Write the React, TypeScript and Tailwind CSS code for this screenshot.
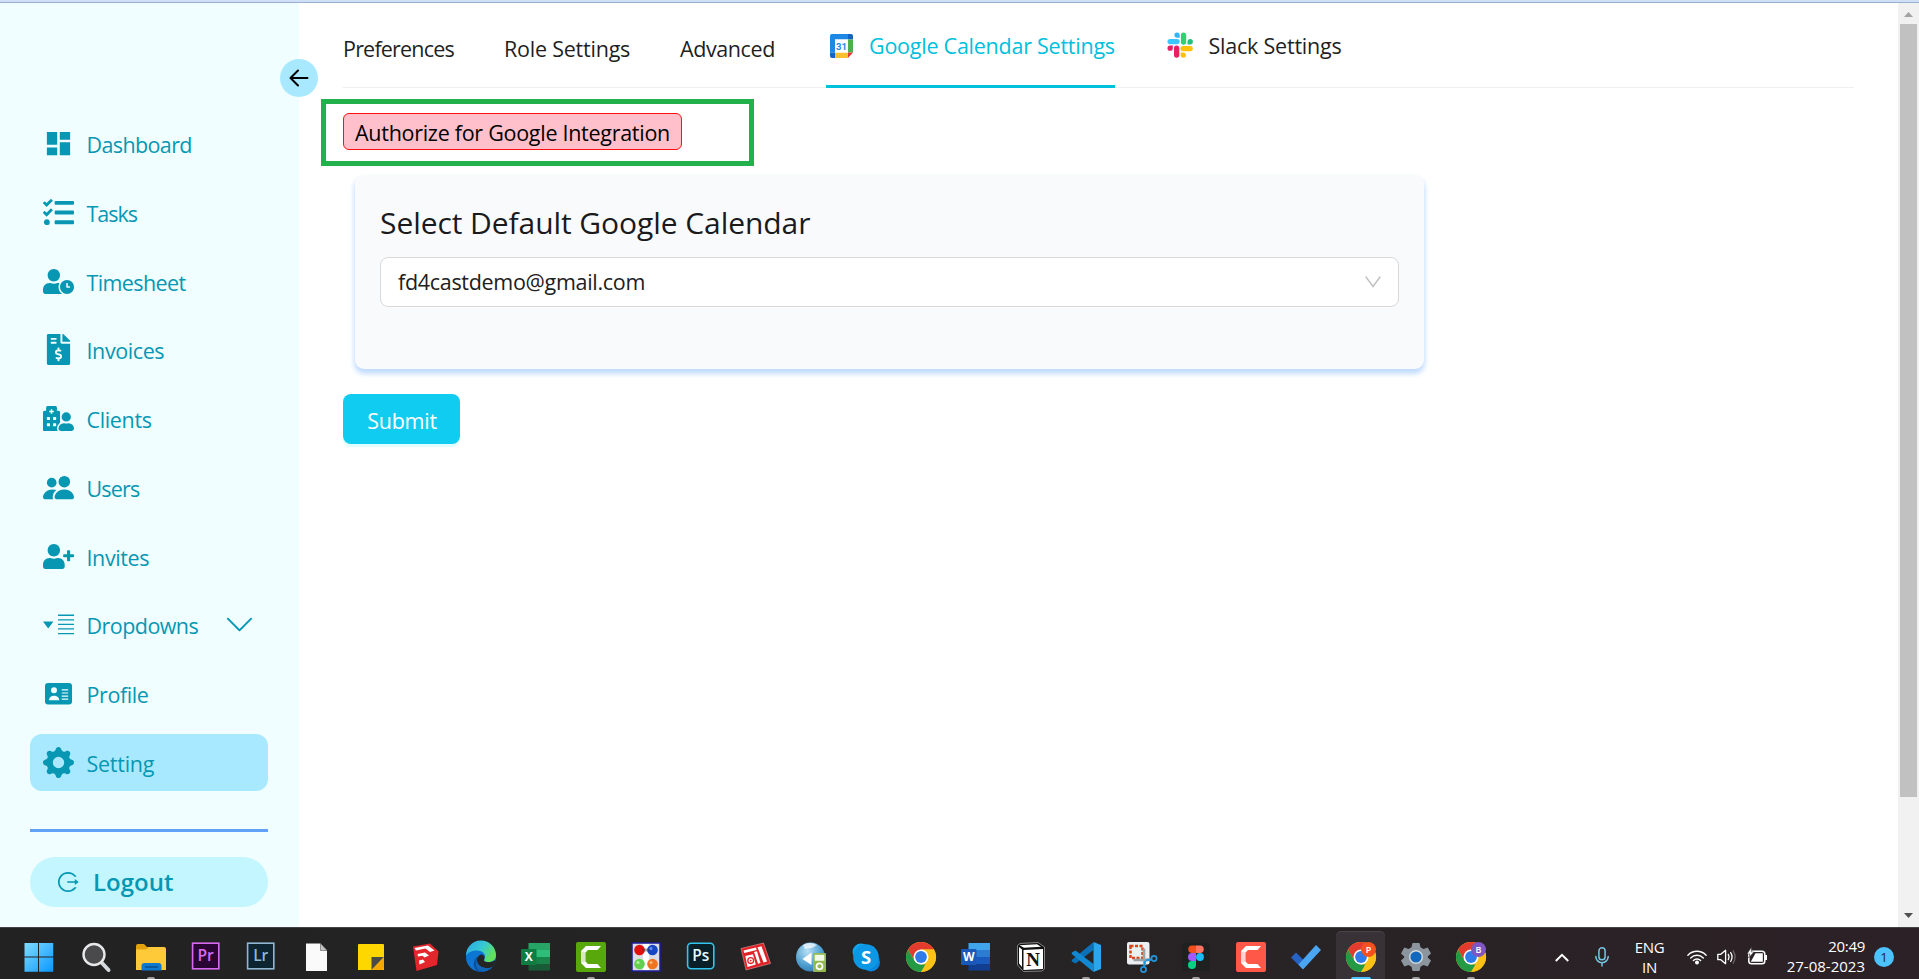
import type { ReactNode } from "react";
import { MdDashboard } from "react-icons/md";
import { FaTasks, FaUserClock, FaFileInvoiceDollar, FaHospitalUser, FaUserPlus } from "react-icons/fa";
import { BsPeopleFill, BsGearFill, BsChevronDown } from "react-icons/bs";
import { AiOutlineLogout } from "react-icons/ai";

const DropdownsIcon = () => (
  <svg width="31" height="21" viewBox="0 0 31 21" fill="currentColor">
    <path d="M0 7.600h10.400L5.200 14.400z" />
    <path d="M15 .6h16v1.300H15zM15 5.200h16v1.300H15zM15 9.800h16v1.300H15zM15 14.300h16v1.300H15zM15 18.900h16v1.300H15z" />
  </svg>
);

const ProfileIcon = () => (
  <svg width="27" height="22" viewBox="0 0 27 22">
    <rect width="27" height="21.500" rx="3" fill="currentColor" />
    <circle cx="9" cy="7.300" r="3" fill="#f0feff" />
    <path d="M4 17.300c0-3 2-4.600 5-4.600s5.200 1.600 5.200 4.600z" fill="#f0feff" />
    <path d="M16.700 6.900h6.500M16.700 10h6.500M16.700 13.100h6.500M16.700 16.200h6.500" stroke="#f0feff" strokeWidth="1.200" />
  </svg>
);

type NavItem = { label: string; tracking: string; icon: ReactNode; active?: boolean; chevron?: boolean };

const navItems: NavItem[] = [
  { label: "Dashboard", tracking: "tracking-[-0.62px]", icon: <MdDashboard size={31} /> },
  { label: "Tasks", tracking: "tracking-[-1px]", icon: <FaTasks size={31} /> },
  { label: "Timesheet", tracking: "tracking-[-0.6px]", icon: <FaUserClock size={31} /> },
  { label: "Invoices", tracking: "tracking-[-0.4px]", icon: <FaFileInvoiceDollar size={31} /> },
  { label: "Clients", tracking: "tracking-[-0.35px]", icon: <FaHospitalUser size={31} /> },
  { label: "Users", tracking: "tracking-[-0.85px]", icon: <BsPeopleFill size={31} /> },
  { label: "Invites", tracking: "tracking-[-0.4px]", icon: <FaUserPlus size={31} /> },
  { label: "Dropdowns", tracking: "tracking-[-0.55px]", icon: <DropdownsIcon />, chevron: true },
  { label: "Profile", tracking: "tracking-[-0.4px]", icon: <ProfileIcon /> },
  { label: "Setting", tracking: "tracking-[-0.25px]", icon: <BsGearFill size={31} />, active: true },
];

function Sidebar() {
  return (
    <aside className="relative flex w-[299px] shrink-0 flex-col bg-[#f0feff] pt-[112px] pr-[31px] pl-[30px] text-[#0797b3]">
      <button className="absolute top-[56px] left-[280px] z-10 flex size-[38px] items-center justify-center rounded-full bg-[#a8e9ff]">
        <svg width="20" height="18" viewBox="0 0 20 18" fill="none" stroke="#000" strokeWidth="2" strokeLinecap="round" strokeLinejoin="round">
          <path d="M18.500 9H1.500M9 1.500L1.500 9L9 16.500" />
        </svg>
      </button>
      <nav className="flex flex-col gap-[11.75px]">
        {navItems.map((item) => (
          <a
            key={item.label}
            className={`flex h-[57px] items-center rounded-[12px] pl-[13px] ${item.active ? "bg-[#a8e9ff]" : ""}`}
          >
            <span className="flex w-[31px] shrink-0 justify-center">{item.icon}</span>
            <span className={`mt-[3px] ml-[12.5px] text-[21.5px] leading-[30px] ${item.tracking}`}>{item.label}</span>
            {item.chevron && <BsChevronDown size={31} className="mr-[13px] ml-auto" />}
          </a>
        ))}
      </nav>
      <hr className="mt-[38px] h-[3px] border-0 bg-[#60a2fa]" />
      <button className="mt-[25px] flex h-[50px] items-center rounded-[25px] bg-[#c3f6ff] pl-[26px]">
        <AiOutlineLogout size={24} />
        <span className="mt-[1px] ml-[13px] text-[24px] leading-[32px] font-semibold">Logout</span>
      </button>
    </aside>
  );
}

const CalendarIcon = () => (
  <svg width="23" height="24" viewBox="0 0 23 24" className="shrink-0">
    <path d="M2 0H18V5.500H5V18.500H0V2Q0 0 2 0Z" fill="#1e88e5" />
    <path d="M18 0h3q2 0 2 2v3.500h-5z" fill="#1565c0" />
    <path d="M18 5.500h5v13h-5z" fill="#4caf50" />
    <path d="M5 18.500h13V24H5z" fill="#fbc02d" />
    <path d="M0 18.500h5V24H2q-2 0-2-2z" fill="#1565c0" />
    <path d="M18 18.500h5L18 24z" fill="#e53935" />
    <path d="M5 5.500h13v13H5z" fill="#fff" />
    <text x="11.500" y="15.500" textAnchor="middle" fontFamily="Roboto" fontSize="9.500" fontWeight="700" fill="#1e88e5">31</text>
  </svg>
);

const SlackIcon = () => (
  <svg width="26" height="26" viewBox="0 0 26 26" className="shrink-0">
    <path d="M10 .5a2.600 2.600 0 0 0 0 5.200h2.700V3.100A2.650 2.650 0 0 0 10 .5z" fill="#33b5f5" />
    <rect x=".5" y="7" width="12.200" height="5.200" rx="2.600" fill="#40c4ff" />
    <rect x="13.900" y=".5" width="5.300" height="12.200" rx="2.650" fill="#2fd173" />
    <path d="M20.500 12.500V9.700a2.700 2.700 0 1 1 2.700 2.800z" fill="#2bbd7e" />
    <rect x="7" y="13.500" width="5.300" height="12.200" rx="2.650" fill="#e91e63" />
    <path d="M5.800 13.500v2.700a2.650 2.650 0 1 1-2.650-2.700z" fill="#e91e63" />
    <rect x="13.500" y="14" width="12.300" height="5.200" rx="2.600" fill="#ffc107" />
    <path d="M13.700 20.500h2.700a2.600 2.600 0 1 1-2.700 2.600z" fill="#ffc107" />
  </svg>
);

function Tabs() {
  return (
    <div className="mx-[44px] flex h-[85px] items-stretch border-b border-[#f0f0f0] text-[21.5px] leading-[30px] text-[#1f1f1f]">
      <div className="w-[161px] pt-[31px] tracking-[-0.8px]">Preferences</div>
      <div className="w-[176px] pt-[31px] tracking-[-0.22px]">Role Settings</div>
      <div className="w-[146px] pt-[31px] tracking-[-0.4px]">Advanced</div>
      <div className="-mb-px flex h-[85px] w-[289px] items-start border-b-[3px] border-[#00c0de] pt-[28px] pl-[4px] text-[#00bfdc]">
        <div className="mt-[3px]">
          <CalendarIcon />
        </div>
        <span className="ml-[16px] tracking-[-0.24px] whitespace-nowrap">Google Calendar Settings</span>
      </div>
      <div className="ml-[52px] flex items-start pt-[28px]">
        <div className="mt-[1px]">
          <SlackIcon />
        </div>
        <span className="ml-[15.5px] tracking-[-0.22px] whitespace-nowrap">Slack Settings</span>
      </div>
    </div>
  );
}

function Main() {
  return (
    <main className="flex min-w-0 flex-1 flex-col items-start bg-white">
      <div className="w-full">
        <Tabs />
      </div>
      <div className="mt-[11px] ml-[22px] h-[67px] w-[433px] border-[5px] border-[#22b14c] pt-[9px] pl-[17px]">
        <button className="flex h-[37px] w-[339px] items-center justify-center rounded-[6px] border border-[#ff1010] bg-[#ffc0cb] text-[21.5px] leading-[30px] tracking-[-0.28px] text-black">
          <span className="mt-[3px] whitespace-nowrap">Authorize for Google Integration</span>
        </button>
      </div>
      <section className="mt-[9px] ml-[56px] h-[194px] w-[1069px] rounded-[9px] bg-[#f9fafc] px-[25px] pt-[27px] shadow-[0_4px_6px_-1px_#bfdbfe,0_4px_6px_-1px_#bfdbfe]">
        <h2 className="h-[55px] text-[30px] leading-[42px] tracking-[-0.07px] text-[#1a1a1c]">Select Default Google Calendar</h2>
        <div className="flex h-[50px] items-center justify-between rounded-[8px] border border-[#d9d9d9] bg-white px-[17px]">
          <span className="text-[21.5px] leading-[30px] tracking-[-0.3px] text-[#202020]">fd4castdemo@gmail.com</span>
          <svg width="16" height="12" viewBox="0 0 16 12" fill="none" stroke="#bfbfbf" strokeWidth="1.500" className="mb-[1px]">
            <path d="M.7.600L8 10.500L15.300.600" />
          </svg>
        </div>
      </section>
      <button className="mt-[25px] ml-[44px] flex h-[50px] w-[117px] items-center justify-center rounded-[8px] bg-[#10ccf0] text-[21.5px] leading-[30px] tracking-[-0.25px] text-white shadow-[0_3px_0_#e0feff]">
        <span className="mt-[3px] ml-[1px]">Submit</span>
      </button>
    </main>
  );
}

function Scrollbar() {
  return (
    <div className="flex w-[21px] shrink-0 flex-col items-center bg-[#f1f1f1] py-[9px]">
      <svg width="9" height="5" viewBox="0 0 9 5" fill="#a3a3a3">
        <path d="M4.500 0L9 5H0z" />
      </svg>
      <div className="mt-[7px] h-[773px] w-[17px] bg-[#c1c1c1]" />
      <svg width="9" height="5" viewBox="0 0 9 5" fill="#505050" className="mt-auto">
        <path d="M0 0h9L4.500 5z" />
      </svg>
    </div>
  );
}

function Icon({ children }: { children: ReactNode }) {
  return (
    <svg width="32" height="32" viewBox="0 0 32 32" className="overflow-visible">
      {children}
    </svg>
  );
}

const Windows = () => (
  <Icon>
    <defs>
      <linearGradient id="win" x1="0" y1="0" x2="1" y2="1">
        <stop offset="0" stopColor="#7fdcff" />
        <stop offset="1" stopColor="#0a97ff" />
      </linearGradient>
    </defs>
    <path d="M1.500 2H15v13.500H1.500zM16 2h14.200v13.500H16zM1.500 16.500H15V30.700H1.500zM16 16.500h14.200v14.200H16z" fill="url(#win)" />
  </Icon>
);

const SearchIcon = () => (
  <Icon>
    <path d="M22 22l6.500 7" stroke="#d5d8dd" strokeWidth="4" strokeLinecap="round" />
    <circle cx="14" cy="13.500" r="10.500" fill="#4a4a4c" stroke="#e6e8ea" strokeWidth="2.400" />
  </Icon>
);

const Folder = () => (
  <Icon>
    <path d="M1 5q0-2 2-2h6l3 3h8v8H1z" fill="#e2a20c" />
    <path d="M1 8.500h10l3-2.500h15q2 0 2 2v21H1z" fill="#ffca3a" />
    <path d="M6.500 29.500V25q0-3 3-3h14q3 0 3 3v4.500z" fill="#0f78cf" />
    <path d="M10 26h13" stroke="#084a86" strokeWidth="1.300" />
  </Icon>
);

function AdobeTile({ label, fg, bg, rx }: { label: string; fg: string; bg: string; rx: number }) {
  return (
    <Icon>
      <rect x="2.600" y="2.200" width="26.200" height="25.600" rx={rx} fill={bg} stroke={fg} strokeWidth="1.600" />
      <text x="15.700" y="20.300" textAnchor="middle" fontFamily="Open Sans" fontSize="15.500" fontWeight="600" fill={fg === "#31c5f0" ? "#e8fbff" : fg}>
        {label}
      </text>
    </Icon>
  );
}

const FileDoc = () => (
  <Icon>
    <path d="M6 2.500h14.500l6.500 7V30H6z" fill="#fafafa" />
    <path d="M20.500 2.500v7H27z" fill="#c5c5c5" stroke="#555" strokeWidth=".6" />
  </Icon>
);

const StickyNote = () => (
  <Icon>
    <path d="M3 4q0-1 1-1h24q1 0 1 1v25H3z" fill="#fed700" />
    <path d="M16.500 29V16H29z" fill="#4a4a46" />
    <path d="M16.500 29L29 16v11q0 2-2 2z" fill="#f5a800" />
  </Icon>
);

const SketchUp = () => (
  <Icon>
    <path d="M3 5.500L20 2.500L28.500 10.500L27 24L6.500 30z" fill="#e3262b" />
    <path d="M4.500 7L18 4.500L24.500 9.500L20 11L15.500 7.500L6 9.500zM7.500 13L15 11.500L19 14.500L14.500 16.500L12.500 14.800L8 15.500zM9 19.500L13 18.500L15 21L9.500 23.500z" fill="#fff" />
  </Icon>
);

const Edge = () => (
  <Icon>
    <defs>
      <linearGradient id="edgeTop" x1="0" y1="0" x2="1" y2=".5">
        <stop offset="0" stopColor="#2aa5e8" />
        <stop offset=".55" stopColor="#36c9d4" />
        <stop offset="1" stopColor="#62e05a" />
      </linearGradient>
    </defs>
    <circle cx="16" cy="16" r="15" fill="#0c76d0" />
    <path d="M1 15A15 15 0 0 1 31 14c0 5-3.500 7-7.500 7c-3.500 0-5-1.200-4.200-2.500C22 14 18 9.500 12 9.500C6 9.500 2 12 1 15z" fill="url(#edgeTop)" />
    <path d="M11.500 20c0 4 4 7.500 9 7.500c3 0 5.500-1 7-2.200A15 15 0 0 1 16 31c-6 0-8-6-7-10c.7-3 2.500-5.200 5-6c-1.500 1.500-2.500 3-2.500 5z" fill="#0b4f9e" />
    <path d="M12 20c-.3-3 1.200-5.500 4-6.500c2.800 0 4.200 2.300 3.200 4.800c-1 1.800 1 3 4.300 3c3 0 6-1 7.300-3c-.3 3-1.600 5.700-3.500 7.500c-5 3-14.800.500-15.300-5.800z" fill="#242425" />
    <path d="M12 20c.500 5.500 8 9 15.500 6.200C24 30 18 31.500 14 29.500C11 27 10 23 12 20z" fill="#1166b8" />
  </Icon>
);

function OfficeTile({ letter, shades, badge }: { letter: string; shades: string[]; badge: string }) {
  return (
    <Icon>
      <rect x="8.500" y="2" width="21.500" height="7" fill={shades[0]} />
      <rect x="8.500" y="9" width="21.500" height="7" fill={shades[1]} />
      <rect x="8.500" y="16" width="21.500" height="7" fill={shades[2]} />
      <rect x="8.500" y="23" width="21.500" height="6.500" fill={shades[3]} />
      <rect x="1" y="8" width="15.500" height="16" rx="1" fill={badge} />
      <text x="8.700" y="20.400" textAnchor="middle" fontFamily="Open Sans" fontSize="12" fontWeight="700" fill="#fff">
        {letter}
      </text>
    </Icon>
  );
}

function Camtasia({ bg }: { bg: string }) {
  return (
    <Icon>
      <rect x="1" y="1" width="30" height="30" rx="2" fill={bg} />
      <path d="M26 5H11l-5 5v12l5 5h15l-3.500-4H13l-2.500-2.500v-9L13 9h9.500z" fill="#fff" />
      <path d="M6 10l4.500 1.500v9L6 22z" fill={bg} fillOpacity=".25" />
    </Icon>
  );
}

const Balls = () => (
  <Icon>
    <rect x="2" y="2" width="28" height="28" fill="#dcdce6" stroke="#1c1c9c" strokeWidth="1.500" />
    <path d="M13 3h6v26h-6z" fill="#fff" />
    <circle cx="9.500" cy="9" r="5.300" fill="#e01010" />
    <circle cx="22.500" cy="9" r="5.300" fill="#1746c4" />
    <circle cx="9.500" cy="23" r="5.300" fill="#62cf50" />
    <circle cx="22.500" cy="23" r="5.300" fill="#ee7420" />
    <path d="M12.500 7.500h7v3h-7z" fill="#333" fillOpacity=".45" />
    <circle cx="21" cy="7.500" r="1.500" fill="#6a90f5" />
    <circle cx="8" cy="21.500" r="1.500" fill="#b3f5a5" />
    <circle cx="21" cy="21.500" r="1.500" fill="#ffb980" />
  </Icon>
);

const Layout = () => (
  <Icon>
    <path d="M1 7.500L23.500 2L30.500 22.500L6 29z" fill="#e02227" stroke="#f4b5b5" strokeWidth=".5" />
    <path d="M3.500 9.500L16 6.600L16.700 9L4.300 12zM17.500 6.200L21.500 5.200L27 20.500L23.500 21.500zM14 11L17 10.300L20.500 22L18 22.800zM5.300 15L13 13.200L15.800 23.500L7.500 26z" fill="#fff" />
    <circle cx="10.700" cy="19.600" r="2.900" fill="none" stroke="#e02227" strokeWidth="1.300" />
    <circle cx="10.700" cy="19.600" r=".9" fill="#e02227" />
  </Icon>
);

const Globe = () => (
  <Icon>
    <defs>
      <radialGradient id="globe" cx=".4" cy=".3" r=".8">
        <stop offset="0" stopColor="#b8e0f5" />
        <stop offset=".6" stopColor="#4f9fd0" />
        <stop offset="1" stopColor="#2f76ac" />
      </radialGradient>
    </defs>
    <circle cx="15.500" cy="16" r="14.500" fill="url(#globe)" />
    <path d="M8 4q7-4 14 0l-5 3l-7 1z" fill="#fff" fillOpacity=".7" />
    <path d="M7.500 18l9-6.500V24z" fill="#fff" />
    <rect x="18" y="12" width="13" height="19" rx="1" fill="#93b950" />
    <rect x="19.700" y="13.800" width="9.600" height="6" fill="#f3f8e8" />
    <circle cx="24.500" cy="25.300" r="3" fill="none" stroke="#fff" strokeWidth="1.700" />
  </Icon>
);

const Skype = () => (
  <Icon>
    <circle cx="11" cy="11" r="8.500" fill="#0fa8ec" />
    <circle cx="21" cy="21.500" r="9" fill="#0a86dc" />
    <circle cx="16" cy="16" r="12.800" fill="#0d98e6" />
    <text x="16" y="22.500" textAnchor="middle" fontFamily="Open Sans" fontSize="18.500" fontWeight="700" fill="#fff">S</text>
  </Icon>
);

function Chrome({ badge, badgeFill }: { badge?: string; badgeFill?: string }) {
  return (
    <Icon>
      <circle cx="16" cy="16" r="15" fill="#fbc116" />
      <path d="M16 8.500h13A15 15 0 0 0 3 8.500l6.500 11.200z" fill="#e33b2e" />
      <path d="M3 8.500l6.500 11.250L16 23.500h6.500L16 31A15 15 0 0 1 3 8.500z" fill="#259a45" />
      <path d="M22.500 19.750L16 31A15 15 0 0 0 29 8.500H16z" fill="#fbc116" />
      <circle cx="16" cy="16" r="7.500" fill="#fff" />
      <circle cx="16" cy="16" r="5.900" fill="#2f7bea" />
      {badge && (
        <>
          <circle cx="23.500" cy="8.500" r="7.500" fill={badgeFill} />
          <text x="23.500" y="11.800" textAnchor="middle" fontFamily="Open Sans" fontSize="9" fontWeight="600" fill="#fff">
            {badge}
          </text>
        </>
      )}
    </Icon>
  );
}

const Notion = () => (
  <Icon>
    <path d="M2.500 4.500L5 2.500L23 1.500L29.500 6V28L27 30L8.500 30.500L2.500 24z" fill="#111" stroke="#9f9f9f" strokeWidth=".8" />
    <path d="M4.500 4.200L22 3.200L26 5.800L9 6.800zM4 6L7 8.500V26L4 22.500z" fill="#fff" />
    <path d="M8.500 9L28 8V28L8.500 29z" fill="#fff" />
    <text x="18.200" y="24.800" textAnchor="middle" fontFamily="Liberation Serif" fontSize="19" fontWeight="700" fill="#111">N</text>
  </Icon>
);

const VsCode = () => (
  <Icon>
    <path d="M23.500 1v8L5.500 22.500L1.800 20.500V19z" fill="#0a70b8" />
    <path d="M1.800 11.500L5.500 9.500L23.500 23v8L1.800 13z" fill="#1387cf" />
    <path d="M23.500 1L31 4v24l-7.500 3z" fill="#29a6ee" />
  </Icon>
);

const Snip = () => (
  <Icon>
    <rect x="2" y="1" width="22.500" height="22.500" rx="2" fill="#eceff1" />
    <rect x="5.500" y="5" width="12" height="12" fill="none" stroke="#d8431c" strokeWidth="2.500" strokeDasharray="3 1.500" />
    <path d="M19 7.500v12l1 5M8.500 19h12l5-1" fill="none" stroke="#9aa3a9" strokeWidth="2.600" />
    <circle cx="29" cy="17.500" r="2.600" fill="none" stroke="#2196dd" strokeWidth="1.700" />
    <circle cx="18.500" cy="28.500" r="2.600" fill="none" stroke="#2196dd" strokeWidth="1.700" />
    <path d="M20 20l-1 6M20.500 19.500l6-1" stroke="#2196dd" strokeWidth="1.800" />
  </Icon>
);

const Figma = () => (
  <Icon>
    <rect x="2" y="2" width="28" height="28" rx="3" fill="#1f2121" />
    <path d="M16 4.500v7.500h-4a3.750 3.750 0 0 1 0-7.500z" fill="#f24e1e" />
    <path d="M16 4.500h4a3.750 3.750 0 0 1 0 7.500h-4z" fill="#ff7262" />
    <path d="M16 12v8h-4a4 4 0 0 1 0-8z" fill="#a259ff" />
    <circle cx="20" cy="16" r="3.900" fill="#1abcfe" />
    <path d="M16 20v4a4 4 0 1 1-4-4z" fill="#0acf83" />
  </Icon>
);

const Todo = () => (
  <Icon>
    <path d="M1 16.500l5-5l9.500 9.500l-3 7z" fill="#2763c4" />
    <path d="M8.500 23.500L26 4l5 5L13 28.500z" fill="#4aa6f2" />
  </Icon>
);

const SettingsGear = () => (
  <Icon>
    <path d="M12.500 2h7l1 4.200l3 1.700l4.200-1.300l3.300 6l-3.200 3v.8l3.200 3l-3.300 6l-4.200-1.300l-3 1.700l-1 4.200h-7l-1-4.200l-3-1.700l-4.200 1.300l-3.300-6l3.200-3v-.8l-3.200-3l3.300-6l4.200 1.300l3-1.700z" fill="#8c959d" />
    <circle cx="16" cy="16" r="7" fill="#d5dade" />
    <circle cx="16" cy="16" r="5.600" fill="#1168bd" />
  </Icon>
);

type TaskbarApp = { id: string; icon: ReactNode; running?: boolean; active?: boolean };

const taskbarApps: TaskbarApp[] = [
  { id: "search", icon: <SearchIcon /> },
  { id: "explorer", icon: <Folder />, running: true },
  { id: "premiere", icon: <AdobeTile label="Pr" fg="#d66bf0" bg="#2a0634" rx={0} /> },
  { id: "lightroom", icon: <AdobeTile label="Lr" fg="#8fb8d4" bg="#0c2531" rx={0} /> },
  { id: "file", icon: <FileDoc /> },
  { id: "notes", icon: <StickyNote /> },
  { id: "sketchup", icon: <SketchUp /> },
  { id: "edge", icon: <Edge /> },
  { id: "excel", icon: <OfficeTile letter="X" shades={["#27a567", "#2fbd7a", "#17854a", "#185c37"]} badge="#107c41" /> },
  { id: "camtasia", icon: <Camtasia bg="#58a80c" />, running: true },
  { id: "balls", icon: <Balls /> },
  { id: "photoshop", icon: <AdobeTile label="Ps" fg="#31c5f0" bg="#0a2029" rx={3.5} /> },
  { id: "layout", icon: <Layout /> },
  { id: "globe", icon: <Globe /> },
  { id: "skype", icon: <Skype /> },
  { id: "chrome", icon: <Chrome /> },
  { id: "word", icon: <OfficeTile letter="W" shades={["#41a5ee", "#2b7cd3", "#185abd", "#103f91"]} badge="#1a58b8" /> },
  { id: "notion", icon: <Notion /> },
  { id: "vscode", icon: <VsCode />, running: true },
  { id: "snip", icon: <Snip /> },
  { id: "figma", icon: <Figma />, running: true },
  { id: "recorder", icon: <Camtasia bg="#ff5848" /> },
  { id: "todo", icon: <Todo /> },
  { id: "chrome-p", icon: <Chrome badge="P" badgeFill="#f4511e" />, active: true },
  { id: "settings", icon: <SettingsGear />, running: true },
  { id: "chrome-b", icon: <Chrome badge="B" badgeFill="#7e57c2" />, running: true },
];

function Tray() {
  return (
    <div className="ml-auto flex items-center pt-[7px] text-[15px] leading-[20px] text-white">
      <svg width="14" height="9" viewBox="0 0 14 9" fill="none" stroke="#fff" strokeWidth="2">
        <path d="M.8 8L7 1.800L13.200 8" />
      </svg>
      <svg width="14" height="20" viewBox="0 0 14 20" fill="none" stroke="#74c7e3" strokeWidth="1.500" strokeLinecap="round" className="ml-[26px]">
        <rect x="3.900" y=".8" width="6.200" height="12" rx="3.100" />
        <path d="M.8 9.500a6.200 6.200 0 0 0 12.400 0M7 15.800V19" />
      </svg>
      <div className="ml-[25px] flex w-[31px] flex-col items-center pb-[1px] tracking-[-0.3px]">
        <span>ENG</span>
        <span>IN</span>
      </div>
      <svg width="20" height="16" viewBox="0 0 20 16" fill="none" stroke="#fff" strokeWidth="1.400" strokeLinecap="round" className="ml-[22px]">
        <path d="M.9 6.200a12.600 12.600 0 0 1 18.200 0M3.700 9a8.700 8.700 0 0 1 12.600 0M6.400 11.500a5 5 0 0 1 7.200 0" />
        <circle cx="10" cy="13.600" r="1.300" fill="#fff" />
      </svg>
      <svg width="21" height="16" viewBox="0 0 21 16" fill="none" stroke="#fff" strokeWidth="1.300" strokeLinecap="round" strokeLinejoin="round" className="ml-[10px]">
        <path d="M.8 5.300h3L8.600 1.300v13.400L3.800 10.700h-3zM11.300 5.400q1.500 2.600 0 5.200M13.700 3.600q2.700 4.400 0 8.800" />
        <path d="M16.200 1.800q3.800 6.200 0 12.400" stroke="#6a6366" />
      </svg>
      <svg width="21" height="18" viewBox="0 0 21 18" className="mb-[2px] ml-[9px]">
        <rect x="1.800" y="4.300" width="16" height="12.400" rx="2.800" fill="none" stroke="#fff" strokeWidth="1.500" />
        <path d="M18 8h2v5h-2z" fill="#fff" />
        <path d="M3.800 14.700L8.500 6.300H15.800V14.700z" fill="#fff" />
        <path d="M4.500 0L0 7h3L1.500 11L7 5H4.300z" fill="#fff" stroke="#2b2226" strokeWidth=".5" />
      </svg>
      <div className="ml-[16px] flex w-[81px] flex-col items-end pb-[3px] whitespace-nowrap">
        <span className="tracking-[-0.3px]">20:49</span>
        <span>27-08-2023</span>
      </div>
      <div className="mr-[25px] ml-[9px] flex size-[20px] items-center justify-center rounded-full bg-[#4cc2ff] text-[13px] text-[#1b2a35]">
        1
      </div>
    </div>
  );
}

function Taskbar() {
  return (
    <footer className="flex h-[52px] shrink-0 border-t border-[#434245] bg-linear-to-r from-[#222222] via-[#262425] to-[#2c2126] pl-[11px]">
      <div className="flex w-[57px] items-start justify-center pt-[13px] pr-[1px]">
        <Windows />
      </div>
      {taskbarApps.map((app) => (
        <div key={app.id} className="flex w-[55px] flex-col items-center px-[3px] pt-[4px]">
          <div
            className={`flex w-full flex-1 flex-col items-center justify-between rounded-t-[5px] pt-[9px] ${app.active ? "bg-[#383135] shadow-[0_-1px_0_#4a4347]" : ""}`}
          >
            {app.icon}
            {app.active && <span className="h-[2px] w-[20px] rounded-t-full bg-[#4cc2ff]" />}
            {app.running && <span className="h-[2px] w-[8px] rounded-t-full bg-[#a09c9e]" />}
          </div>
        </div>
      ))}
      <Tray />
    </footer>
  );
}

export default function App() {
  return (
    <div className="flex h-[979px] w-full flex-col overflow-hidden bg-white font-['Open_Sans',sans-serif]">
      <div className="h-[3px] shrink-0 border-b border-[#9bb0d0] bg-[#cfdff8]" />
      <div className="flex h-[924px] shrink-0">
        <Sidebar />
        <Main />
        <Scrollbar />
      </div>
      <Taskbar />
    </div>
  );
}
